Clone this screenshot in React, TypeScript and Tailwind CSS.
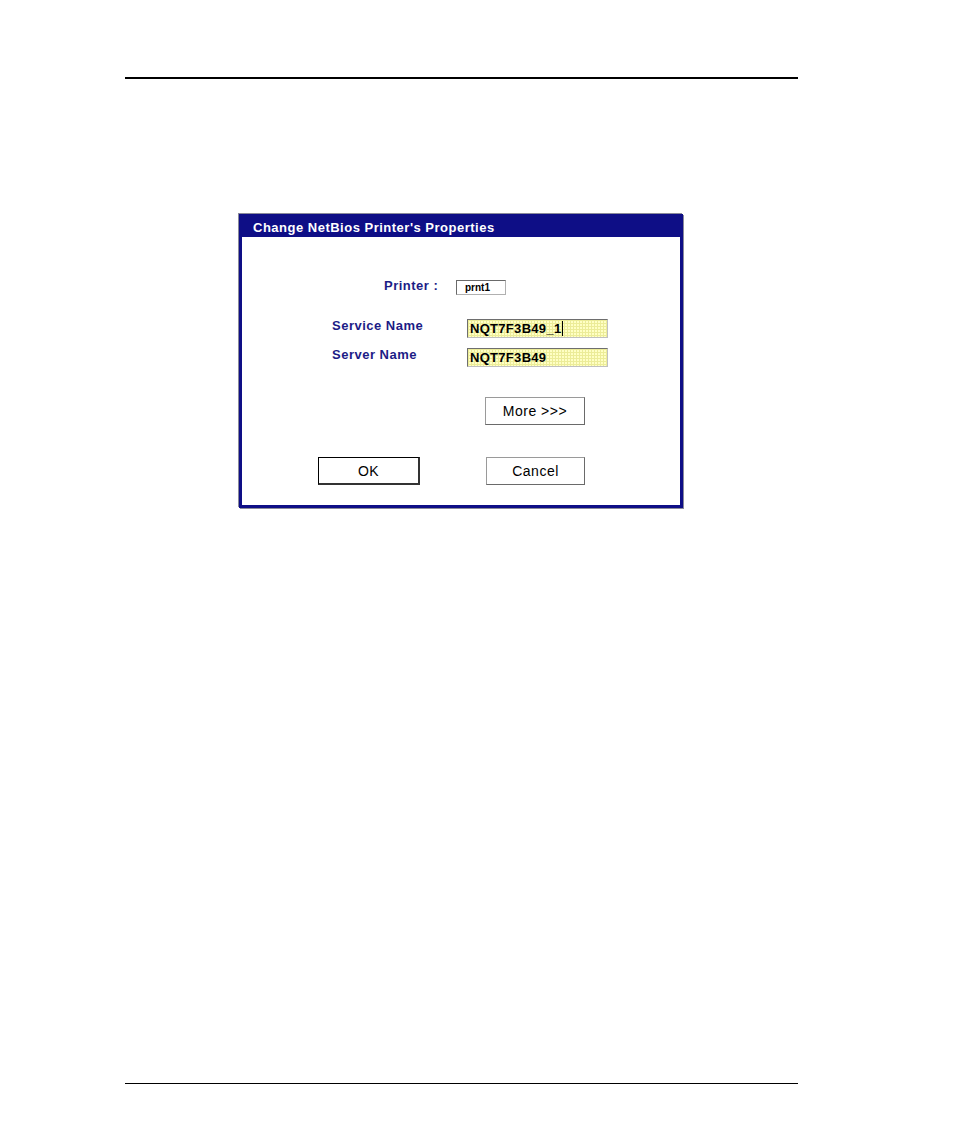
const FIELD_BG =
  "bg-[#ffffc4] bg-[linear-gradient(to_right,#ecec98_1px,transparent_1px),linear-gradient(to_bottom,#ecec98_1px,transparent_1px)] bg-[size:3px_3px]";

function Field({ value, caret }: { value: string; caret?: boolean }) {
  return (
    <div
      className={
        "flex h-[19px] w-[141px] items-center border border-t-[#6e6e6e] border-l-[#6e6e6e] border-r-[#c0c0c0] border-b-[#c0c0c0] pl-[2px] " +
        FIELD_BG
      }
    >
      <span className="text-[13px] font-bold leading-none tracking-[0.3px] text-black">{value}</span>
      {caret && <span className="ml-[1px] h-[15px] w-[1px] bg-black" />}
    </div>
  );
}

function Button({ label, primary, className }: { label: string; primary?: boolean; className?: string }) {
  return (
    <button
      className={
        "flex h-[28px] items-center justify-center bg-white text-[14px] leading-none tracking-[0.5px] text-black " +
        (primary
          ? "border border-black border-r-2 border-b-2 border-r-[#333] border-b-[#333] "
          : "border border-[#9a9a9a] border-r-[#6a6a6a] border-b-[#6a6a6a] ") +
        (className ?? "")
      }
    >
      {label}
    </button>
  );
}

export default function App() {
  return (
    <div className="min-h-[1145px] w-[954px] bg-white pt-[77px] font-['Liberation_Sans',Arial,sans-serif]">
      <div className="ml-[125px] h-[2px] w-[673px] bg-black" />

      <div className="ml-[239px] mt-[135px] w-[444px] border-[3px] border-[#0e0e86] shadow-[1px_1px_0_#8a8a9a,-1px_-1px_0_#8a8a9a]">
        <div className="flex h-[20px] items-center bg-[#0e0e86] pl-[11px]">
          <span className="text-[13px] font-bold leading-none tracking-[0.5px] text-white">
            Change NetBios Printer's Properties
          </span>
        </div>

        <div className="h-[268px] bg-white pt-[43px]">
          <div className="ml-[142px] flex h-[15px] items-center">
            <span className="w-[72px] pb-[4px] text-[13px] leading-[13px] font-bold tracking-[0.5px] text-[#1c1c86]">
              Printer :
            </span>
            <div className="flex h-[15px] w-[50px] items-center border border-t-[#6a6a6a] border-l-[#6a6a6a] border-r-[#b0b0b0] border-b-[#b0b0b0] pl-[8px]">
              <span className="text-[10px] font-bold leading-none text-black">prnt1</span>
            </div>
          </div>

          <div className="ml-[90px] mt-[24px] flex h-[19px] items-center">
            <span className="w-[135px] pb-[6px] text-[13px] leading-[13px] font-bold tracking-[0.5px] text-[#1c1c86]">
              Service Name
            </span>
            <Field value="NQT7F3B49_1" caret />
          </div>

          <div className="ml-[90px] mt-[10px] flex h-[19px] items-center">
            <span className="w-[135px] pb-[6px] text-[13px] leading-[13px] font-bold tracking-[0.5px] text-[#1c1c86]">
              Server Name
            </span>
            <Field value="NQT7F3B49" />
          </div>

          <div className="ml-[243px] mt-[30px] flex">
            <Button label="More >>>" className="w-[100px]" />
          </div>

          <div className="ml-[76px] mt-[32px] flex gap-[66px]">
            <Button label="OK" primary className="w-[102px]" />
            <Button label="Cancel" className="w-[99px]" />
          </div>
        </div>
      </div>

      <div className="ml-[125px] mt-[575px] h-[1px] w-[673px] bg-black" />
    </div>
  );
}
